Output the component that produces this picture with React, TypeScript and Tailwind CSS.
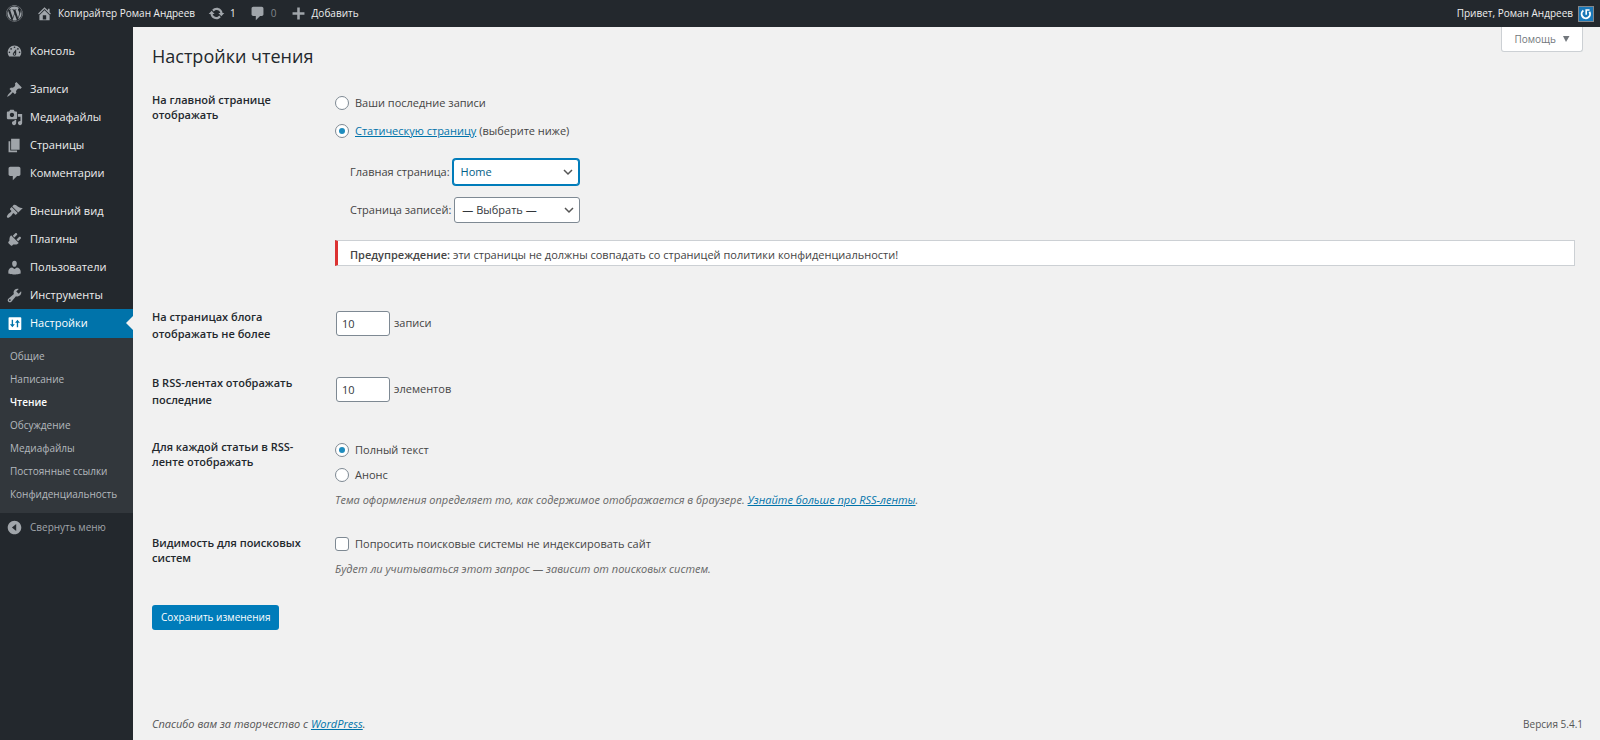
import React, { useState } from 'react';
import clsx from 'clsx';
import { FaWordpress } from 'react-icons/fa';

const ICONS = {
  home: 'M16 8.5l1.53 1.53-1.06 1.06L10 4.6l-6.47 6.49-1.06-1.06L10 2.5l4 4v-2h2v4zm-6-2.46l6 5.99V18H4v-5.97zM12 17v-5H8v5h4z',
  update:
    'M10.2 3.28c3.53 0 6.43 2.61 6.92 6h2.08l-3.5 4-3.5-4h2.32c-.45-1.97-2.21-3.45-4.32-3.45-1.45 0-2.73.71-3.54 1.78L4.95 5.66C6.23 4.2 8.11 3.28 10.2 3.28zm-.4 13.44c-3.52 0-6.43-2.61-6.92-6H.8l3.5-4c1.17 1.33 2.33 2.67 3.5 4H5.48c.45 1.97 2.21 3.45 4.32 3.45 1.45 0 2.73-.71 3.54-1.78l1.71 1.95c-1.28 1.46-3.15 2.38-5.25 2.38z',
  plus: 'M17 8.5v3h-5.5V17h-3v-5.5H3v-3h5.5V3h3v5.5H17z',
  dashboard:
    'M3.76 16h12.48c1.1-1.37 1.76-3.11 1.76-5 0-4.42-3.58-8-8-8s-8 3.58-8 8c0 1.89.66 3.63 1.76 5zM10 4c.55 0 1 .45 1 1s-.45 1-1 1-1-.45-1-1 .45-1 1-1zM6 6c.55 0 1 .45 1 1s-.45 1-1 1-1-.45-1-1 .45-1 1-1zm8 0c.55 0 1 .45 1 1s-.45 1-1 1-1-.45-1-1 .45-1 1-1zm-5.37 5.55L12 7v6c0 1.1-.9 2-2 2s-2-.9-2-2c0-.57.24-1.08.63-1.45zM4 10c.55 0 1 .45 1 1s-.45 1-1 1-1-.45-1-1 .45-1 1-1zm12 0c.55 0 1 .45 1 1s-.45 1-1 1-1-.45-1-1 .45-1 1-1zm-5 3c0-.55-.45-1-1-1s-1 .45-1 1 .45 1 1 1 1-.45 1-1z',
  posts:
    'M10.44 3.02l1.82-1.82 6.36 6.35-1.83 1.82c-1.05-.68-2.48-.57-3.41.36l-.75.75c-.92.93-1.04 2.35-.35 3.41l-1.83 1.82-2.41-2.41-2.8 2.79c-.42.42-3.38 2.71-3.8 2.29s1.86-3.39 2.28-3.81l2.79-2.79L4.1 9.36l1.83-1.82c1.05.69 2.48.57 3.4-.36l.75-.75c.93-.92 1.05-2.35.36-3.41z',
  media:
    'M13 11V4c0-.55-.45-1-1-1h-1.67L9 1H5L3.67 3H2c-.55 0-1 .45-1 1v7c0 .55.45 1 1 1h10c.55 0 1-.45 1-1zM7 4.5c1.38 0 2.5 1.12 2.5 2.5S8.38 9.5 7 9.5 4.5 8.38 4.5 7 5.62 4.5 7 4.5zM14 6h5v10.5c0 1.38-1.12 2.5-2.5 2.5S14 17.88 14 16.5s1.12-2.5 2.5-2.5c.17 0 .34.02.5.05V9h-3V6zm-4 8.05V13h2v3.5c0 1.38-1.12 2.5-2.5 2.5S7 17.88 7 16.5 8.12 14 9.5 14c.17 0 .34.02.5.05z',
  pages: 'M6 15V2h10v13H6zm-1 1h8v2H3V5h2v11z',
  comments:
    'M5 2h10c1.1 0 2 .9 2 2v7c0 1.1-.9 2-2 2h-2l-5 5v-5H5c-1.1 0-2-.9-2-2V4c0-1.1.9-2 2-2z',
  appearance:
    'M14.48 11.06L7.41 3.99l1.5-1.5c.5-.56 2.3-.47 3.51.32 1.21.8 1.43 1.28 2.91 2.1 1.18.64 2.45 1.26 4.45.85zm-.71.71L6.7 4.7 4.93 6.47c-.39.39-.39 1.02 0 1.41l1.06 1.06c.39.39.39 1.03 0 1.42-.6.6-1.43 1.11-2.21 1.69-.35.26-.7.53-1.01.84C1.43 14.23.4 16.08 1.4 17.07c.99 1 2.84-.03 4.18-1.36.31-.31.58-.66.85-1.02.57-.78 1.08-1.61 1.69-2.21.39-.39 1.02-.39 1.41 0l1.06 1.06c.39.39 1.02.39 1.41 0z',
  plugins:
    'M13.11 4.36L9.87 7.6 8 5.73l3.24-3.24c.35-.34 1.05-.2 1.56.32.52.51.66 1.21.31 1.55zm-8 1.77l.91-1.12 9.01 9.01-1.19.84c-.71.71-2.63 1.16-3.82 1.16H8.5L7.37 17.1c-.43.44-1.22.44-1.66 0l-2.8-2.8c-.44-.43-.44-1.22 0-1.66L4 11.55V9.96c0-1.19.4-3.12 1.11-3.83zm7.26 3.97l3.24-3.24c.34-.35 1.04-.21 1.55.31.52.51.66 1.21.31 1.55l-3.24 3.25z',
  users:
    'M10 9.25c-2.27 0-2.73-3.44-2.73-3.44C7 4.02 7.82 2 9.97 2c2.16 0 2.98 2.02 2.71 3.81 0 0-.41 3.44-2.68 3.44zm0 2.57L12.72 10c2.39 0 4.52 2.33 4.52 4.53v2.49s-3.65 1.13-7.24 1.13c-3.65 0-7.24-1.13-7.24-1.13v-2.49c0-2.25 1.94-4.48 4.47-4.48z',
  tools:
    'M16.68 9.77c-1.34 1.34-3.3 1.67-4.95.99l-5.41 6.52c-.99.99-2.59.99-3.58 0s-.99-2.59 0-3.57l6.52-5.42c-.68-1.65-.35-3.61.99-4.95 1.28-1.28 3.12-1.62 4.72-1.06l-2.89 2.89 2.82 2.82 2.86-2.87c.53 1.58.18 3.39-1.08 4.65zM3.81 16.21c.4.39 1.04.39 1.43 0 .4-.4.4-1.04 0-1.43-.39-.4-1.03-.4-1.43 0-.39.39-.39 1.03 0 1.43z',
  // plate with a down arrow on the left and an up arrow on the right
  settings:
    'M4 2.500h13a1 1 0 0 1 1 1v13a1 1 0 0 1-1 1H4a1 1 0 0 1-1-1v-13a1 1 0 0 1 1-1zM6.700 5.500v5.500H4.600l2.900 3.500 2.900-3.500H8.300V5.500zM12.700 14.500h1.600V9h2.100l-2.900-3.500L10.600 9h2.100z',
  collapse: 'M10 2c4.42 0 8 3.58 8 8s-3.58 8-8 8-8-3.58-8-8 3.58-8 8-8zm2 12V6l-5 4z',
};

type IconName = keyof typeof ICONS;

const Icon: React.FC<{ name: IconName; className?: string }> = ({ name, className }) => (
  <svg viewBox="0 0 20 20" fill="currentColor" fillRule="evenodd" aria-hidden="true" className={clsx('size-[17px] shrink-0', className)}>
    <path d={ICONS[name]} />
  </svg>
);

const menuGroups: { icon: IconName; label: string }[][] = [
  [{ icon: 'dashboard', label: 'Консоль' }],
  [
    { icon: 'posts', label: 'Записи' },
    { icon: 'media', label: 'Медиафайлы' },
    { icon: 'pages', label: 'Страницы' },
    { icon: 'comments', label: 'Комментарии' },
  ],
  [
    { icon: 'appearance', label: 'Внешний вид' },
    { icon: 'plugins', label: 'Плагины' },
    { icon: 'users', label: 'Пользователи' },
    { icon: 'tools', label: 'Инструменты' },
    { icon: 'settings', label: 'Настройки' },
  ],
];

const submenu = ['Общие', 'Написание', 'Чтение', 'Обсуждение', 'Медиафайлы', 'Постоянные ссылки', 'Конфиденциальность'];

const AdminBar = () => (
  <header className="flex h-[27px] items-center justify-between bg-[#23282d] px-[6px] text-[10px] text-[#eee]">
    <div className="flex items-center gap-[13px]">
      <a href="#about" aria-label="О WordPress" className="text-[#a0a5aa]">
        <FaWordpress className="size-[17px]" />
      </a>
      <a href="#site" className="flex items-center gap-[5px]">
        <Icon name="home" className="text-[#a0a5aa]" />
        Копирайтер Роман Андреев
      </a>
      <a href="#updates" className="flex items-center gap-[5px]">
        <Icon name="update" className="text-[#a0a5aa]" />1
      </a>
      <a href="#comments" className="flex items-center gap-[5px] text-[#82878c]">
        <Icon name="comments" className="text-[#a0a5aa]" />0
      </a>
      <a href="#new" className="flex items-center gap-[5px]">
        <Icon name="plus" className="size-[15px] text-[#a0a5aa]" />
        Добавить
      </a>
    </div>
    <a href="#profile" className="flex items-center gap-[5px]">
      Привет, Роман Андреев
      <svg viewBox="0 0 16 16" aria-hidden="true" className="size-[16px]">
        <rect width="16" height="16" fill="#82878c" />
        <rect x="1" y="1" width="14" height="14" fill="#1a78b8" />
        <path d="M5.400 4.600a4.200 4.200 0 1 0 6 1.200" fill="none" stroke="#fff" strokeWidth="1.900" />
        <path d="M8.200 8.800V4h3.400" fill="none" stroke="#fff" strokeWidth="1.600" />
      </svg>
    </a>
  </header>
);

const Sidebar = () => (
  <nav className="w-[133px] shrink-0 bg-[#23282d] pt-[10px]">
    {menuGroups.map((group, i) => (
      <ul key={i} className={clsx(i > 0 && 'mt-[10px]')}>
        {group.map(({ icon, label }) => {
          const active = icon === 'settings';
          return (
            <li key={label}>
              <a
                href={`#${icon}`}
                className={clsx(
                  'relative flex items-center gap-[7px] pl-[6px] text-[11px]',
                  active ? 'h-[29px] bg-[#0073aa] text-white' : 'h-7 text-[#eee]',
                )}
              >
                <Icon name={icon} className={active ? 'text-white' : 'text-[#a0a5aa]'} />
                {label}
                {active && (
                  <span className="absolute right-0 top-[7px] border-y-[7px] border-r-[7px] border-y-transparent border-r-[#f1f1f1]" />
                )}
              </a>
            </li>
          );
        })}
      </ul>
    ))}
    <ul className="bg-[#32373c] py-[7px] text-[10px]">
      {submenu.map((item) => (
        <li key={item}>
          <a
            href="#settings"
            className={clsx(
              'flex h-[23px] items-center pl-[10px] whitespace-nowrap',
              item === 'Чтение' ? 'font-semibold text-white' : 'text-[#b4b9be]',
            )}
          >
            {item}
          </a>
        </li>
      ))}
    </ul>
    <button type="button" className="flex h-[29px] items-center gap-[7px] pl-[6px] text-[10px] text-[#a0a5aa]">
      <Icon name="collapse" />
      Свернуть меню
    </button>
  </nav>
);

const Row: React.FC<{ title: string; roomy?: boolean; className?: string; children: React.ReactNode }> = ({
  title,
  roomy,
  className,
  children,
}) => (
  <div className={clsx('grid grid-cols-[153px_1fr] gap-x-[30px]', className)}>
    <div className={clsx('font-semibold text-[#23282d]', roomy ? 'leading-[17px]' : 'leading-[15px]')}>{title}</div>
    <div>{children}</div>
  </div>
);

const Radio: React.FC<{ name: string; checked: boolean; onChange: () => void; children: React.ReactNode }> = ({
  name,
  checked,
  onChange,
  children,
}) => (
  <label className="flex h-[18px] items-center gap-[6px]">
    <input
      type="radio"
      name={name}
      checked={checked}
      onChange={onChange}
      className="grid size-[14px] shrink-0 appearance-none place-content-center rounded-full border border-[#7e8993] bg-white checked:before:size-[6px] checked:before:rounded-full checked:before:bg-[#1e8cbe]"
    />
    <span>{children}</span>
  </label>
);

const PageSelect: React.FC<{ id: string; label: string; options: string[]; focused?: boolean }> = ({
  id,
  label,
  options,
  focused,
}) => (
  <div className="flex items-center gap-[3px]">
    <label htmlFor={id}>{label}</label>
    <div className="relative">
      <select
        id={id}
        className={clsx(
          'h-[26px] w-[126px] appearance-none rounded-[3px] border bg-white pl-[7px] outline-none',
          focused ? 'border-[#007cba] text-[#016087] ring-1 ring-[#007cba]' : 'border-[#7e8993] text-[#32373c]',
        )}
      >
        {options.map((o) => (
          <option key={o}>{o}</option>
        ))}
      </select>
      <svg viewBox="0 0 10 7" aria-hidden="true" className="pointer-events-none absolute right-[6px] top-[10px] h-[7px] w-[10px]">
        <path d="M1 1l4 4 4-4" fill="none" stroke="#555" strokeWidth="1.5" />
      </svg>
    </div>
  </div>
);

const NumberField: React.FC<{ id: string; label: string }> = ({ id, label }) => (
  <div className="flex items-center gap-1 pt-[3px] pl-px">
    <input
      id={id}
      type="text"
      inputMode="numeric"
      defaultValue="10"
      className="h-[25px] w-[54px] rounded-[3px] border border-[#7e8993] bg-white pl-[5px] text-[#32373c] outline-none"
    />
    <label htmlFor={id}>{label}</label>
  </div>
);

const App: React.FC = () => {
  const [front, setFront] = useState('page');
  const [feed, setFeed] = useState('full');

  return (
    <div className="flex min-h-screen flex-col bg-[#f1f1f1] font-['Open_Sans','Noto_Sans',sans-serif] text-[11px] text-[#444]">
      <AdminBar />
      <div className="flex grow">
        <Sidebar />
        <main className="flex grow flex-col pr-[17px] pl-[19px]">
          <div className="flex items-start justify-between">
            <h1 className="pt-[17px] text-lg leading-6 text-[#23282d]">Настройки чтения</h1>
            <button
              type="button"
              className="flex h-[25px] items-center gap-[6px] rounded-b-[3px] border border-t-0 border-[#ccd0d4] bg-white px-3 text-[10px] text-[#72777c]"
            >
              Помощь
              <svg viewBox="0 0 8 6" aria-hidden="true" className="h-[6px] w-2">
                <path d="M1 0h6.500L4 6z" fill="#72777c" />
              </svg>
            </button>
          </div>

          <form className="mt-6 pr-2" onSubmit={(e) => e.preventDefault()}>
            <Row title="На главной странице отображать">
              <div className="flex flex-col gap-[10px] pt-[2px]">
                <Radio name="front" checked={front === 'posts'} onChange={() => setFront('posts')}>
                  Ваши последние записи
                </Radio>
                <Radio name="front" checked={front === 'page'} onChange={() => setFront('page')}>
                  <a href="#pages" className="text-[#0073aa] underline">
                    Статическую страницу
                  </a>{' '}
                  (выберите ниже)
                </Radio>
              </div>
              <div className="mt-[19px] ml-[15px] flex flex-col gap-3">
                <PageSelect id="page-on-front" label="Главная страница:" options={['Home']} focused />
                <PageSelect id="page-for-posts" label="Страница записей:" options={['— Выбрать —']} />
              </div>
              <div className="mt-[17px] border border-l-[3px] border-[#ccd0d4] border-l-[#dc3232] bg-white pt-1 pb-px pl-3 leading-[19px]">
                <strong className="font-semibold">Предупреждение:</strong> эти страницы не должны совпадать со страницей
                политики конфиденциальности!
              </div>
            </Row>

            <Row title="На страницах блога отображать не более" roomy className="mt-[42px]">
              <NumberField id="posts-per-page" label="записи" />
            </Row>

            <Row title="В RSS-лентах отображать последние" roomy className="mt-8">
              <NumberField id="posts-per-rss" label="элементов" />
            </Row>

            <Row title="Для каждой статьи в RSS-ленте отображать" className="mt-[31px]">
              <div className="flex flex-col gap-[7px] pt-[2px]">
                <Radio name="feed" checked={feed === 'full'} onChange={() => setFeed('full')}>
                  Полный текст
                </Radio>
                <Radio name="feed" checked={feed === 'summary'} onChange={() => setFeed('summary')}>
                  Анонс
                </Radio>
                <p className="leading-[18px] text-[#666] italic">
                  Тема оформления определяет то, как содержимое отображается в браузере.{' '}
                  <a href="#feeds" className="text-[#0073aa] underline">
                    Узнайте больше про RSS-ленты
                  </a>
                  .
                </p>
              </div>
            </Row>

            <Row title="Видимость для поисковых систем" className="mt-[26px]">
              <div className="flex flex-col gap-[7px]">
                <label className="flex h-[18px] items-center gap-[6px]">
                  <input type="checkbox" className="size-[14px] appearance-none rounded-[3px] border border-[#7e8993] bg-white" />
                  Попросить поисковые системы не индексировать сайт
                </label>
                <p className="leading-[18px] text-[#666] italic">
                  Будет ли учитываться этот запрос — зависит от поисковых систем.
                </p>
              </div>
            </Row>

            <button type="submit" className="mt-[27px] h-[25px] rounded-[3px] bg-[#007cba] px-[9px] text-[10px] text-white">
              Сохранить изменения
            </button>
          </form>

          <footer className="mt-auto flex justify-between pb-[7px] text-[10px] leading-[18px] text-[#555]">
            <p className="text-[11px] italic">
              Спасибо вам за творчество с{' '}
              <a href="#wordpress" className="text-[#0073aa] underline">
                WordPress
              </a>
              .
            </p>
            <p>Версия 5.4.1</p>
          </footer>
        </main>
      </div>
    </div>
  );
};

export default App;
